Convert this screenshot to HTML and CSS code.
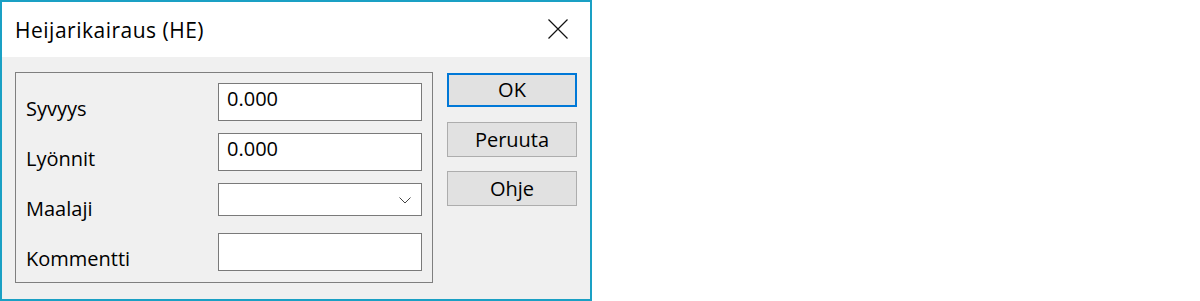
FILE: index.html
```html
<!DOCTYPE html>
<html lang="fi">
<head>
    <meta charset="UTF-8">
    <title>Heijarikairaus (HE)</title>
    <link rel="stylesheet" href="styles.css">
</head>
<body>

<div class="ikkuna">
    <div class="otsikko">
        <span class="otsikko-teksti">Heijarikairaus (HE)</span>
        <svg class="sulje" width="20" height="20" viewBox="0 0 20 20">
            <path d="M0.5 0.5 L19.5 19.5 M19.5 0.5 L0.5 19.5" stroke="#111" stroke-width="1.2" fill="none"/>
        </svg>
    </div>

    <div class="sisalto">
        <div class="ryhma">
            <label class="nimike">Syvyys</label>
            <div class="kentta">0.000</div>

            <label class="nimike">Lyönnit</label>
            <div class="kentta">0.000</div>

            <label class="nimike">Maalaji</label>
            <div class="kentta valinta">
                <svg width="12" height="7" viewBox="0 0 12 7">
                    <path d="M0.5 0.5 L6 6 L11.5 0.5" stroke="#444" stroke-width="1" fill="none"/>
                </svg>
            </div>

            <label class="nimike">Kommentti</label>
            <div class="kentta"></div>
        </div>

        <div class="napit">
            <button class="nappi oletus">OK</button>
            <button class="nappi">Peruuta</button>
            <button class="nappi">Ohje</button>
        </div>
    </div>
</div>

</body>
</html>
```

FILE: styles.css
```css
html, body {
    margin: 0;
    padding: 0;
    background-color: white;
}
body {
    font-family: "Open Sans", "Noto Sans", sans-serif;
    font-size: 20px;
    color: black;
}
.ikkuna {
    box-sizing: border-box;
    width: 592px;
    height: 301px;
    border: 2px solid #1aa0c4;
    display: flex;
    flex-direction: column;
}
.otsikko {
    height: 55px;
    background-color: white;
    display: flex;
    justify-content: space-between;
    align-items: flex-start;
    padding: 0 22px 0 13px;
}
.otsikko-teksti {
    font-size: 21px;
    letter-spacing: 0.5px;
    line-height: 27px;
    padding-top: 15px;
}
.sulje {
    margin-top: 17px;
}
.sisalto {
    flex-grow: 1;
    background-color: #f0f0f0;
    display: flex;
    align-items: flex-start;
    padding: 15px 0 0 13px;
}
.ryhma {
    box-sizing: border-box;
    width: 418px;
    height: 211px;
    border: 1px solid #7f7f7f;
    padding: 10px 10px 0 10px;
    display: grid;
    grid-template-columns: 192px 204px;
    grid-auto-rows: 38px;
    row-gap: 12px;
}
.nimike {
    align-self: end;
    line-height: 24px;
}
.kentta {
    box-sizing: border-box;
    height: 38px;
    background-color: white;
    border: 1px solid #7a7a7a;
    padding: 3px 0 0 8px;
    line-height: 24px;
}
.valinta {
    height: 33px;
    display: flex;
    justify-content: flex-end;
    align-items: flex-start;
    padding: 13px 10px 0 0;
}
.valinta svg {
    display: block;
}
.napit {
    display: flex;
    flex-direction: column;
    margin: 1px 0 0 14px;
}
.nappi {
    box-sizing: border-box;
    width: 130px;
    height: 35px;
    margin-bottom: 14px;
    background-color: #e1e1e1;
    border: 1px solid #adadad;
    border-radius: 0;
    font-family: "Open Sans", "Noto Sans", sans-serif;
    font-size: 20px;
    line-height: 24px;
    color: black;
    padding: 0;
}
.nappi.oletus {
    height: 34px;
    margin-bottom: 15px;
    border: 2px solid #0078d7;
}
```
